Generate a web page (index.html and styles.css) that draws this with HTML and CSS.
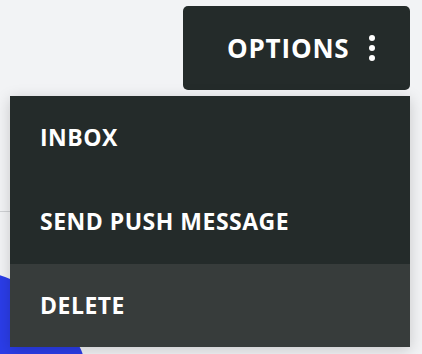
FILE: index.html
```html
<!DOCTYPE html>
<html lang="en">
<head>
<meta charset="utf-8">
<title>Options</title>
<link rel="stylesheet" href="styles.css">
</head>
<body>
<div class="page">
  <div class="bg-line"></div>
  <div class="bg-blob"></div>
  <div class="dropdown">
    <button class="options-btn" type="button">
      <span class="options-label">OPTIONS</span>
      <span class="dots"><i></i><i></i><i></i></span>
    </button>
    <ul class="menu">
      <li class="menu-item">INBOX</li>
      <li class="menu-item">SEND PUSH MESSAGE</li>
      <li class="menu-item is-active">DELETE</li>
    </ul>
  </div>
</div>
</body>
</html>
```

FILE: styles.css
```css
* { box-sizing: border-box; }
html, body { margin: 0; padding: 0; }
body {
  background: #f2f3f5;
  font-family: "Open Sans", "Liberation Sans", sans-serif;
  width: 422px;
  height: 354px;
  overflow: hidden;
}
.page {
  position: relative;
  width: 422px;
  height: 354px;
  overflow: hidden;
}
.bg-line {
  position: absolute;
  left: 0;
  top: 211px;
  width: 40px;
  height: 1px;
  background: #cfd1d4;
}
.bg-blob {
  position: absolute;
  left: -171px;
  top: 269px;
  width: 262px;
  height: 262px;
  border-radius: 50%;
  background: #2b3de8;
}
.dropdown {
  position: relative;
  display: flex;
  flex-direction: column;
  align-items: flex-end;
  padding: 6px 12px 0 10px;
}
.options-btn {
  display: flex;
  align-items: center;
  gap: 20px;
  width: 227px;
  height: 84px;
  padding: 0 36px 0 44px;
  border: 0;
  border-radius: 5px;
  background: #242b2a;
  color: #ffffff;
  font-family: inherit;
  cursor: pointer;
}
.options-label {
  font-size: 26px;
  font-weight: 700;
  letter-spacing: 0.8px;
  line-height: 1;
  white-space: nowrap;
}
.dots {
  display: flex;
  flex-direction: column;
  gap: 4px;
}
.dots i {
  display: block;
  width: 6px;
  height: 6px;
  border-radius: 50%;
  background: #ffffff;
}
.menu {
  list-style: none;
  margin: 6px 0 0 0;
  padding: 0;
  width: 400px;
  background: #242b2a;
  box-shadow: 0 3px 14px rgba(0, 0, 0, 0.18);
}
.menu-item {
  display: flex;
  align-items: center;
  height: 84px;
  padding: 0 30px 2px;
  color: #ffffff;
  font-size: 23px;
  font-weight: 700;
  letter-spacing: 0.5px;
  white-space: nowrap;
}
.menu-item:nth-child(3) { height: 83px; }
.menu-item.is-active { background: #373c3b; }
```
